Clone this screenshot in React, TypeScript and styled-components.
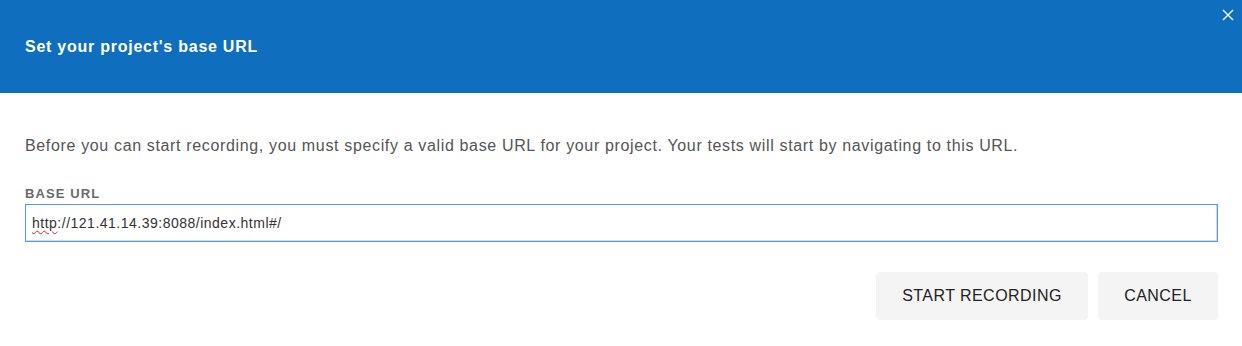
import React, { useState } from 'react';
import styled, { createGlobalStyle } from 'styled-components';

const GlobalStyle = createGlobalStyle`
  html, body {
    margin: 0;
    padding: 0;
    background: #ffffff;
    font-family: "Liberation Sans", Arial, sans-serif;
  }
`;

const Dialog = styled.div`
  width: 1242px;
  height: 346px;
  background: #ffffff;
  display: flex;
  flex-direction: column;
`;

const Header = styled.header`
  position: relative;
  height: 93px;
  background: #106ebe;
  display: flex;
  align-items: center;
  padding: 0 25px;
  box-sizing: border-box;
`;

const Title = styled.h2`
  margin: 0;
  padding-top: 1px;
  color: #ffffff;
  font-size: 16px;
  font-weight: 700;
  letter-spacing: 0.75px;
`;

const CloseButton = styled.button`
  position: absolute;
  top: 5px;
  right: 4px;
  width: 20px;
  height: 20px;
  padding: 0;
  border: none;
  background: none;
  cursor: pointer;
  display: flex;
  align-items: center;
  justify-content: center;
`;

const Body = styled.div`
  display: flex;
  flex-direction: column;
  padding: 44px 24px 0 25px;
`;

const Intro = styled.p`
  margin: 0;
  color: #555555;
  font-size: 16px;
  line-height: 18px;
  letter-spacing: 0.65px;
`;

const Label = styled.label`
  margin-top: 32px;
  color: #6a6a6a;
  font-size: 13px;
  font-weight: 700;
  line-height: 14px;
  letter-spacing: 1.1px;
`;

const FieldWrap = styled.div`
  position: relative;
  margin-top: 3px;
`;

const Input = styled.input`
  display: block;
  width: 100%;
  height: 38px;
  box-sizing: border-box;
  padding: 0 6px;
  border: 1px solid #4c9aff;
  box-shadow: inset -1px -1px 0 #d8d8d8;
  outline: none;
  color: #333333;
  font-family: "Liberation Sans", Arial, sans-serif;
  font-size: 14px;
  letter-spacing: 0.5px;
`;

const Squiggle = styled.span`
  position: absolute;
  left: 7px;
  top: 11px;
  font-size: 14px;
  line-height: 17px;
  letter-spacing: 0.5px;
  color: transparent;
  text-decoration: underline wavy #e0201c;
  text-decoration-thickness: 1px;
  text-underline-offset: 2px;
  pointer-events: none;
`;

const Actions = styled.div`
  display: flex;
  justify-content: flex-end;
  gap: 10px;
  margin-top: 30px;
`;

const Button = styled.button<{ $width: number }>`
  width: ${({ $width }) => $width}px;
  height: 48px;
  border: none;
  border-radius: 4px;
  background: #f4f4f4;
  color: #222222;
  font-family: "Liberation Sans", Arial, sans-serif;
  font-size: 16px;
  letter-spacing: 0.45px;
  cursor: pointer;
`;

const App: React.FC = () => {
  const [url, setUrl] = useState('http://121.41.14.39:8088/index.html#/');

  return (
    <Dialog>
      <GlobalStyle />
      <Header>
        <Title>Set your project's base URL</Title>
        <CloseButton aria-label="Close">
          <svg width="12" height="12" viewBox="0 0 12 12">
            <path d="M1 1 L11 11 M11 1 L1 11" stroke="#ffffff" strokeWidth="1.4" fill="none" />
          </svg>
        </CloseButton>
      </Header>
      <Body>
        <Intro>
          Before you can start recording, you must specify a valid base URL for your project. Your tests will start by navigating to this URL.
        </Intro>
        <Label htmlFor="base-url">BASE URL</Label>
        <FieldWrap>
          <Input id="base-url" value={url} onChange={(e) => setUrl(e.target.value)} spellCheck={false} />
          <Squiggle>http</Squiggle>
        </FieldWrap>
        <Actions>
          <Button $width={212}>START RECORDING</Button>
          <Button $width={120}>CANCEL</Button>
        </Actions>
      </Body>
    </Dialog>
  );
};

export default App;
